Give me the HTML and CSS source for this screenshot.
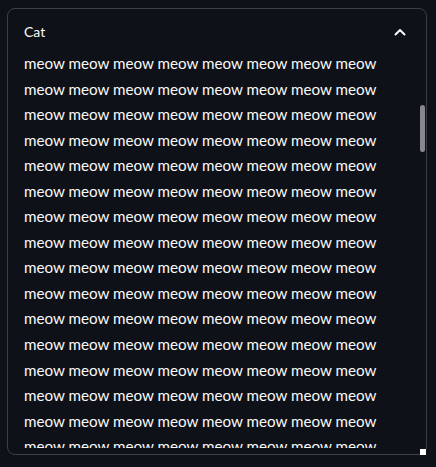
FILE: index.html
```html
<!DOCTYPE html>
<html>
<head>
<meta charset="utf-8">
<link rel="stylesheet" href="styles.css">
</head>
<body>
<div class="expander">
  <div class="summary">
    <span class="label">Cat</span>
    <svg class="chevron" width="12" height="8" viewBox="0 0 12 8"><path d="M1.5 6.5 L6 2 L10.5 6.5" fill="none" stroke="#fafafa" stroke-width="2" stroke-linecap="round" stroke-linejoin="round"/></svg>
  </div>
  <div class="content">
    <div class="line">meow meow meow meow meow meow meow meow</div>
    <div class="line">meow meow meow meow meow meow meow meow</div>
    <div class="line">meow meow meow meow meow meow meow meow</div>
    <div class="line">meow meow meow meow meow meow meow meow</div>
    <div class="line">meow meow meow meow meow meow meow meow</div>
    <div class="line">meow meow meow meow meow meow meow meow</div>
    <div class="line">meow meow meow meow meow meow meow meow</div>
    <div class="line">meow meow meow meow meow meow meow meow</div>
    <div class="line">meow meow meow meow meow meow meow meow</div>
    <div class="line">meow meow meow meow meow meow meow meow</div>
    <div class="line">meow meow meow meow meow meow meow meow</div>
    <div class="line">meow meow meow meow meow meow meow meow</div>
    <div class="line">meow meow meow meow meow meow meow meow</div>
    <div class="line">meow meow meow meow meow meow meow meow</div>
    <div class="line">meow meow meow meow meow meow meow meow</div>
    <div class="line">meow meow meow meow meow meow meow meow</div>
    <div class="line">meow meow meow meow meow meow meow meow</div>
    <div class="line">meow meow meow meow meow meow meow meow</div>
  </div>
  <div class="thumb"></div>
  <div class="corner"></div>
</div>
</body>
</html>
```
FILE: styles.css
```css
html, body {
  margin: 0;
  padding: 0;
  background: #0e1117;
}
body {
  font-family: Lato, "Open Sans", sans-serif;
  color: #fafafa;
}
.expander {
  position: relative;
  box-sizing: border-box;
  margin: 8px 0 0 7px;
  width: 420px;
  height: 447px;
  border: 1px solid rgba(250, 250, 250, 0.2);
  border-radius: 8px;
  display: flex;
  flex-direction: column;
}
.summary {
  box-sizing: border-box;
  display: flex;
  align-items: center;
  justify-content: space-between;
  padding: 3px 20px 0 16px;
  height: 42px;
  flex: none;
}
.label {
  font-size: 14px;
}
.chevron {
  display: block;
}
.content {
  flex: 1;
  overflow: hidden;
  padding: 0 16px;
  margin-bottom: 6px;
  font-size: 15.2px;
  line-height: 25.55px;
}
.line {
  white-space: nowrap;
}
.thumb {
  position: absolute;
  left: 412px;
  top: 96px;
  width: 5px;
  height: 47px;
  border-radius: 3px;
  background: #86888c;
}
.corner {
  position: absolute;
  left: 412px;
  top: 440px;
  width: 6px;
  height: 6px;
  background: #ffffff;
}
```
